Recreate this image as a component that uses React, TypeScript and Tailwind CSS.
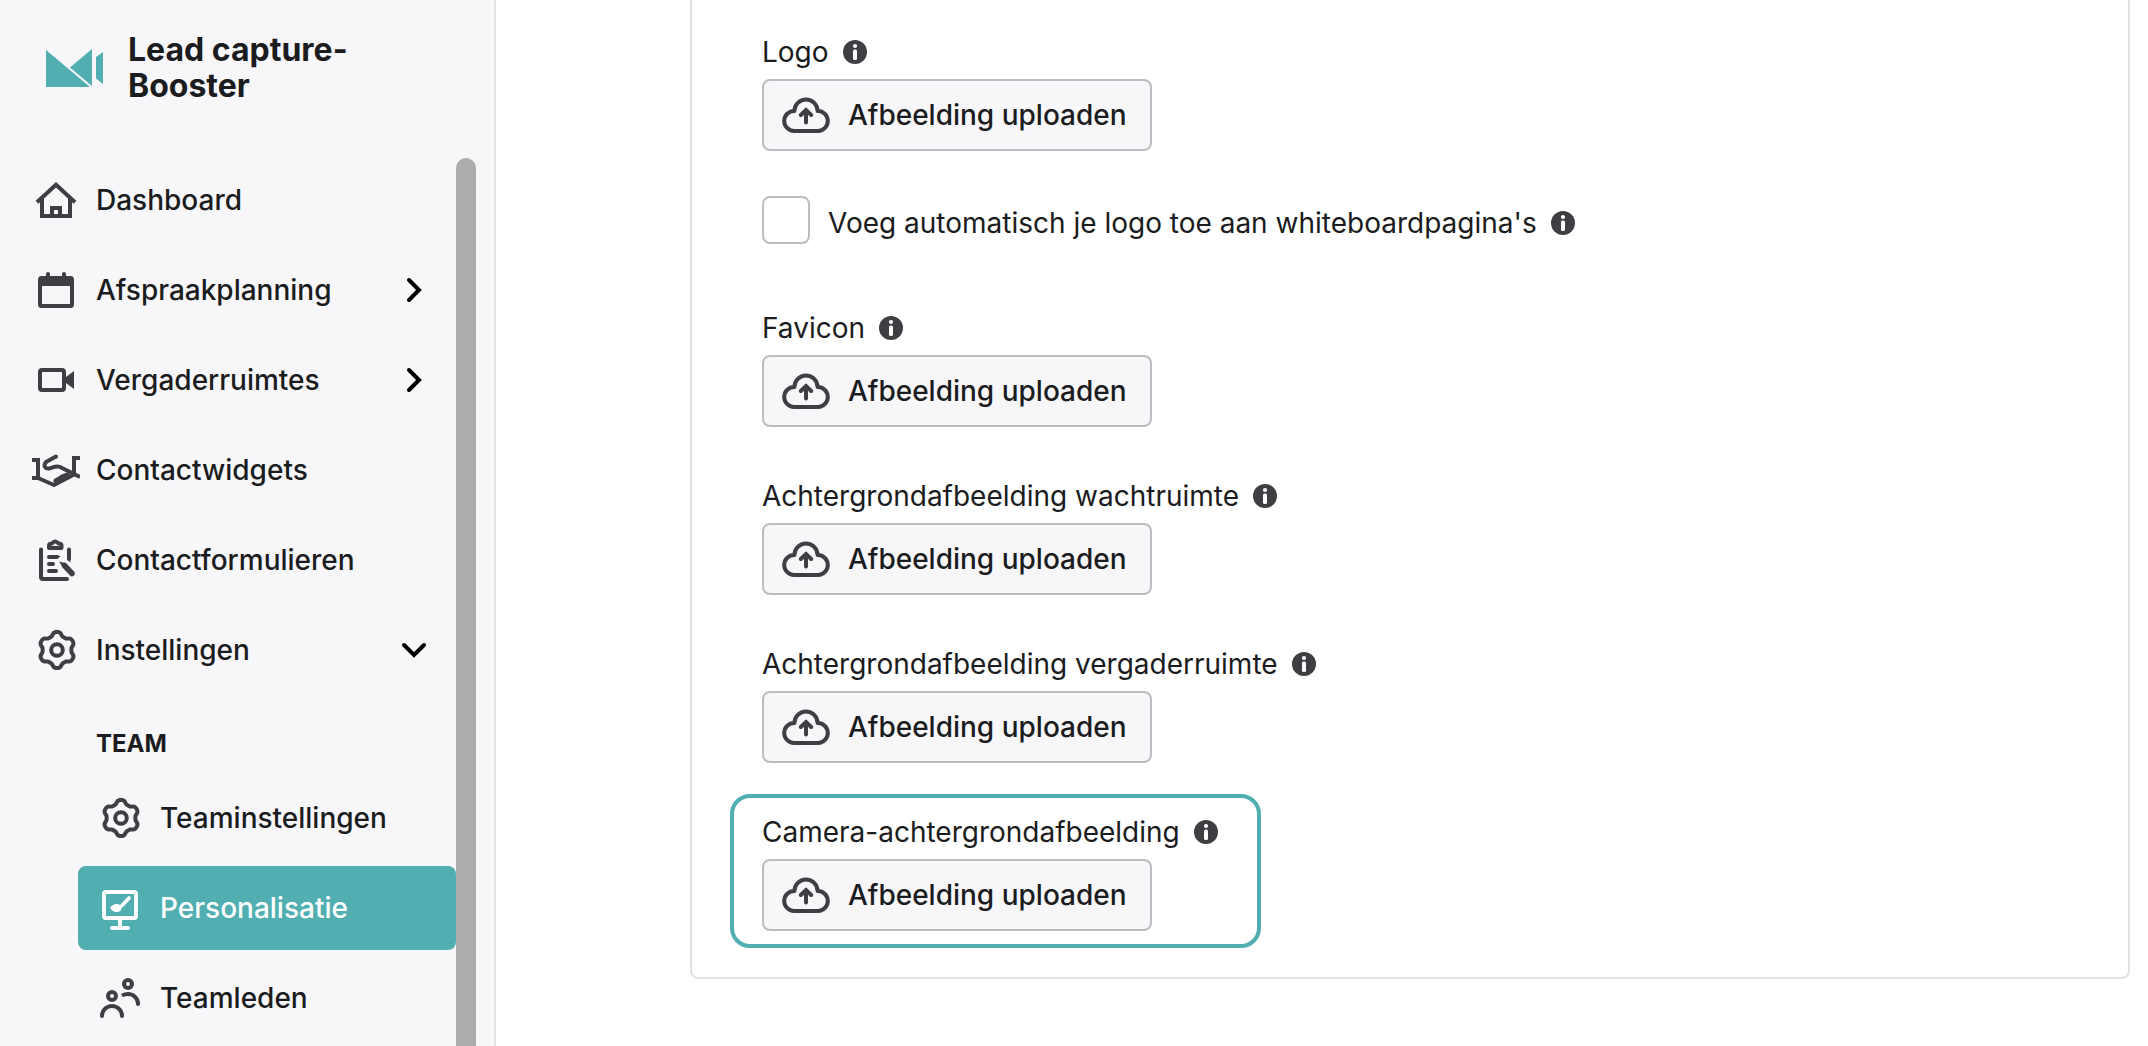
import type { ReactNode } from "react";

function Icon({ children }: { children: ReactNode }) {
  return (
    <svg
      viewBox="0 0 48 48"
      className="size-12 shrink-0"
      fill="none"
      stroke="currentColor"
      strokeWidth={4}
      aria-hidden="true"
    >
      {children}
    </svg>
  );
}

const HomeIcon = () => (
  <Icon>
    <path d="M5 26.2 24 8.8l19 17.4" />
    <path d="M10 22v18h28V22M20 42V32h8v10" />
  </Icon>
);

const CalendarIcon = () => (
  <Icon>
    <rect x="8" y="12" width="32" height="28" rx="1.5" />
    <path d="M8 12h32v8H8z" fill="currentColor" stroke="none" />
    <path d="M16 8v4M32 8v4" strokeLinecap="round" />
  </Icon>
);

const VideoIcon = () => (
  <Icon>
    <rect x="8" y="14" width="24" height="20" rx="2" />
    <path d="M34 21l8-6v18l-8-6z" fill="currentColor" stroke="none" />
  </Icon>
);

const HandshakeIcon = () => (
  <Icon>
    <path d="M0 14h6v18H0M48 12h-6v17" />
    <path
      d="M24 10.5 14 16c-3 4-1 7 3 6.5 4-1 7-3 11-1.5L48 31"
      strokeLinejoin="round"
    />
    <path d="M24 10.5v0" strokeLinecap="round" />
    <path d="M6 32l16 7 20-10.5" strokeLinejoin="round" />
    <path d="M24 35l5-3M30 31l5-2" strokeLinecap="round" strokeWidth={5} />
  </Icon>
);

const ClipboardIcon = () => (
  <Icon>
    <path d="M9 13.5V41q0 2 2 2h24M37 13.5V23" strokeLinecap="round" />
    <path d="M37 22l2 5-4-4z" fill="currentColor" stroke="none" />
    <path d="M17 12V9.5q0-2 3-2 3-4 6.5 0 3 0 3 2V12z" strokeLinejoin="round" />
    <path d="M17 21h8M17 28h4M17 35h7" strokeLinecap="round" />
    <path d="M25 19l4 1.5-6 2z" fill="currentColor" stroke="none" />
    <path d="M32.5 29.5l7.5 8" strokeLinecap="round" strokeWidth={5.5} />
    <path d="M27 25.5l4 1 3 1-3 4z" fill="currentColor" stroke="none" />
  </Icon>
);

const gearPath =
  Array.from({ length: 120 }, (_, i) => {
    const a = (i / 120) * Math.PI * 2;
    const wave = Math.tanh(1.6 * Math.cos(6 * a)) / Math.tanh(1.6);
    const r = 16.2 + 1.8 * wave;
    return `${i ? "L" : "M"}${(25 + r * Math.sin(a)).toFixed(2)} ${(24 - r * Math.cos(a)).toFixed(2)}`;
  }).join("") + "Z";

const GearIcon = () => (
  <Icon>
    <path d={gearPath} strokeLinejoin="round" />
    <circle cx="25" cy="24" r="5.8" />
  </Icon>
);

const MonitorIcon = () => (
  <Icon>
    <rect x="8" y="8" width="32" height="26" rx="2" />
    <path d="M24 35v8" />
    <path d="M16 44h16" strokeLinecap="round" />
    <path d="M33 14l-7 7.5" strokeLinecap="round" strokeWidth={3.6} />
    <path
      d="M14 22.5c2 .5 3-2.5 6.5-2.5 3 0 5 2 5 4.2 0 2.5-3 4.3-6 3.8-3-.5-5-2.5-5.5-5.5z"
      fill="currentColor"
      stroke="none"
    />
  </Icon>
);

const PeopleIcon = () => (
  <Icon>
    <circle cx="16" cy="22" r="4" />
    <circle cx="32" cy="10" r="4" />
    <path d="M6 42a10 10 0 0 1 20 0" strokeLinecap="round" />
    <path d="M26 21.5q3-1.5 6-1.5c6 0 10 5 10 10" />
    <path d="M42 30v0" strokeLinecap="round" />
  </Icon>
);

const CloudIcon = () => (
  <Icon>
    <path
      d="M12 40A10 10 0 0 1 12.4 20A11.6 11.6 0 0 1 35.6 20A10 10 0 0 1 36 40Z"
      strokeLinejoin="round"
    />
    <path d="M24 31.5V19.5M18.8 24 24 19l5.2 5" strokeLinecap="round" />
  </Icon>
);

function Chevron({ down = false }: { down?: boolean }) {
  return (
    <svg
      viewBox="0 0 28 28"
      className="ml-auto size-7 text-black"
      fill="none"
      stroke="currentColor"
      strokeWidth={4}
      strokeLinecap="round"
      aria-hidden="true"
    >
      <path d={down ? "M4 9l10 10L24 9" : "M9 4l10 10L9 24"} />
    </svg>
  );
}

function NavItem({
  icon,
  label,
  chevron,
}: {
  icon: ReactNode;
  label: string;
  chevron?: ReactNode;
}) {
  return (
    <a href="#" className="flex h-[84px] items-center gap-4 pr-7 pl-8 text-[#3e3f43]">
      {icon}
      <span className="text-[#1b1c20]">{label}</span>
      {chevron}
    </a>
  );
}

function SubItem({
  icon,
  label,
  active = false,
}: {
  icon: ReactNode;
  label: string;
  active?: boolean;
}) {
  return (
    <a
      href="#"
      aria-current={active ? "page" : undefined}
      className={
        active
          ? "ml-[78px] flex h-[84px] items-center gap-4 rounded-lg bg-[#51afb2] pl-[18px] text-white"
          : "ml-[78px] flex h-[84px] items-center gap-4 pl-[18px] text-[#3e3f43]"
      }
    >
      {icon}
      <span className={active ? "text-white" : "text-[#1b1c20]"}>{label}</span>
    </a>
  );
}

function Info() {
  return (
    <button type="button" aria-label="Meer informatie" className="shrink-0 text-[#3e3f43]">
      <svg viewBox="0 0 24 24" className="size-6" aria-hidden="true">
        <circle cx="12" cy="12" r="12" fill="currentColor" />
        <circle cx="12" cy="6" r="2.1" fill="white" />
        <rect x="10" y="9.5" width="4" height="10.5" rx="1.6" fill="white" />
      </svg>
    </button>
  );
}

function UploadField({ id, label }: { id: string; label: string }) {
  return (
    <div className="flex flex-col items-start gap-[6px]">
      <div className="flex items-center gap-[14px] leading-[42px]">
        <span id={id}>{label}</span>
        <Info />
      </div>
      <button
        type="button"
        aria-describedby={id}
        className="flex h-[72px] items-center gap-[18px] rounded-lg border-2 border-[#bcbcc1] bg-[#f7f7fa] pr-[23px] pl-[18px] font-medium"
      >
        <span className="text-[#3e3f43]">
          <CloudIcon />
        </span>
        Afbeelding uploaden
      </button>
    </div>
  );
}

export default function App() {
  return (
    <div className="flex h-screen overflow-hidden bg-white font-['Inter',sans-serif] text-[28px] text-[#1b1c20]">
      <aside className="flex w-[496px] shrink-0 flex-col border-r-2 border-[#e2e2e5] bg-[#f7f7fa]">
        <header className="flex h-[158px] shrink-0 items-start gap-[25px] pt-8 pr-16 pl-[46px]">
          <svg
            viewBox="0 0 57 38"
            className="mt-[17px] h-[38px] w-[57px] shrink-0 text-[#51afb2]"
            fill="currentColor"
            aria-hidden="true"
          >
            <path d="M0 1v37h44zM46 0v37L24 18.5zM50 8l7-5v32l-7-5.5z" />
          </svg>
          <p className="text-[32px] leading-9 font-bold">
            Lead capture-
            <br />
            Booster
          </p>
        </header>
        <div className="flex min-h-0 flex-1">
          <nav className="min-w-0 flex-1 overflow-hidden font-medium">
            <div className="flex flex-col gap-[6px]">
              <NavItem icon={<HomeIcon />} label="Dashboard" />
              <NavItem icon={<CalendarIcon />} label="Afspraakplanning" chevron={<Chevron />} />
              <NavItem icon={<VideoIcon />} label="Vergaderruimtes" chevron={<Chevron />} />
              <NavItem icon={<HandshakeIcon />} label="Contactwidgets" />
              <NavItem icon={<ClipboardIcon />} label="Contactformulieren" />
              <NavItem icon={<GearIcon />} label="Instellingen" chevron={<Chevron down />} />
            </div>
            <h2 className="pt-[34px] pb-[14px] pl-24 text-2xl leading-9 font-bold">TEAM</h2>
            <div className="flex flex-col gap-[6px]">
              <SubItem icon={<GearIcon />} label="Teaminstellingen" />
              <SubItem icon={<MonitorIcon />} label="Personalisatie" active />
              <SubItem icon={<PeopleIcon />} label="Teamleden" />
            </div>
          </nav>
          <div className="mr-[18px] w-5 shrink-0 rounded-t-full bg-[#abacae]" />
        </div>
      </aside>

      <main className="min-w-0 flex-1 pr-[18px] pl-[194px]">
        <section className="rounded-b-lg border-x-2 border-b-2 border-[#e2e2e2] px-[70px] pt-[31px] pb-[46px]">
          <UploadField id="logo" label="Logo" />
          <div className="mt-[45px] mb-[57px] flex items-start leading-[54px]">
            <input
              id="whiteboard-logo"
              type="checkbox"
              className="mr-[18px] size-12 shrink-0 appearance-none rounded-lg border-2 border-[#bcbcc1] bg-white"
            />
            <div className="flex items-center gap-[14px]">
              <label htmlFor="whiteboard-logo">
                Voeg automatisch je logo toe aan whiteboardpagina's
              </label>
              <Info />
            </div>
          </div>
          <div className="flex flex-col items-start gap-12">
            <UploadField id="favicon" label="Favicon" />
            <UploadField id="waiting" label="Achtergrondafbeelding wachtruimte" />
            <UploadField id="meeting" label="Achtergrondafbeelding vergaderruimte" />
            <div className="-mx-8 -my-[17px] rounded-[20px] border-4 border-[#51afb2] py-[13px] pr-[39px] pl-7">
              <UploadField id="camera" label="Camera-achtergrondafbeelding" />
            </div>
          </div>
        </section>
      </main>
    </div>
  );
}
